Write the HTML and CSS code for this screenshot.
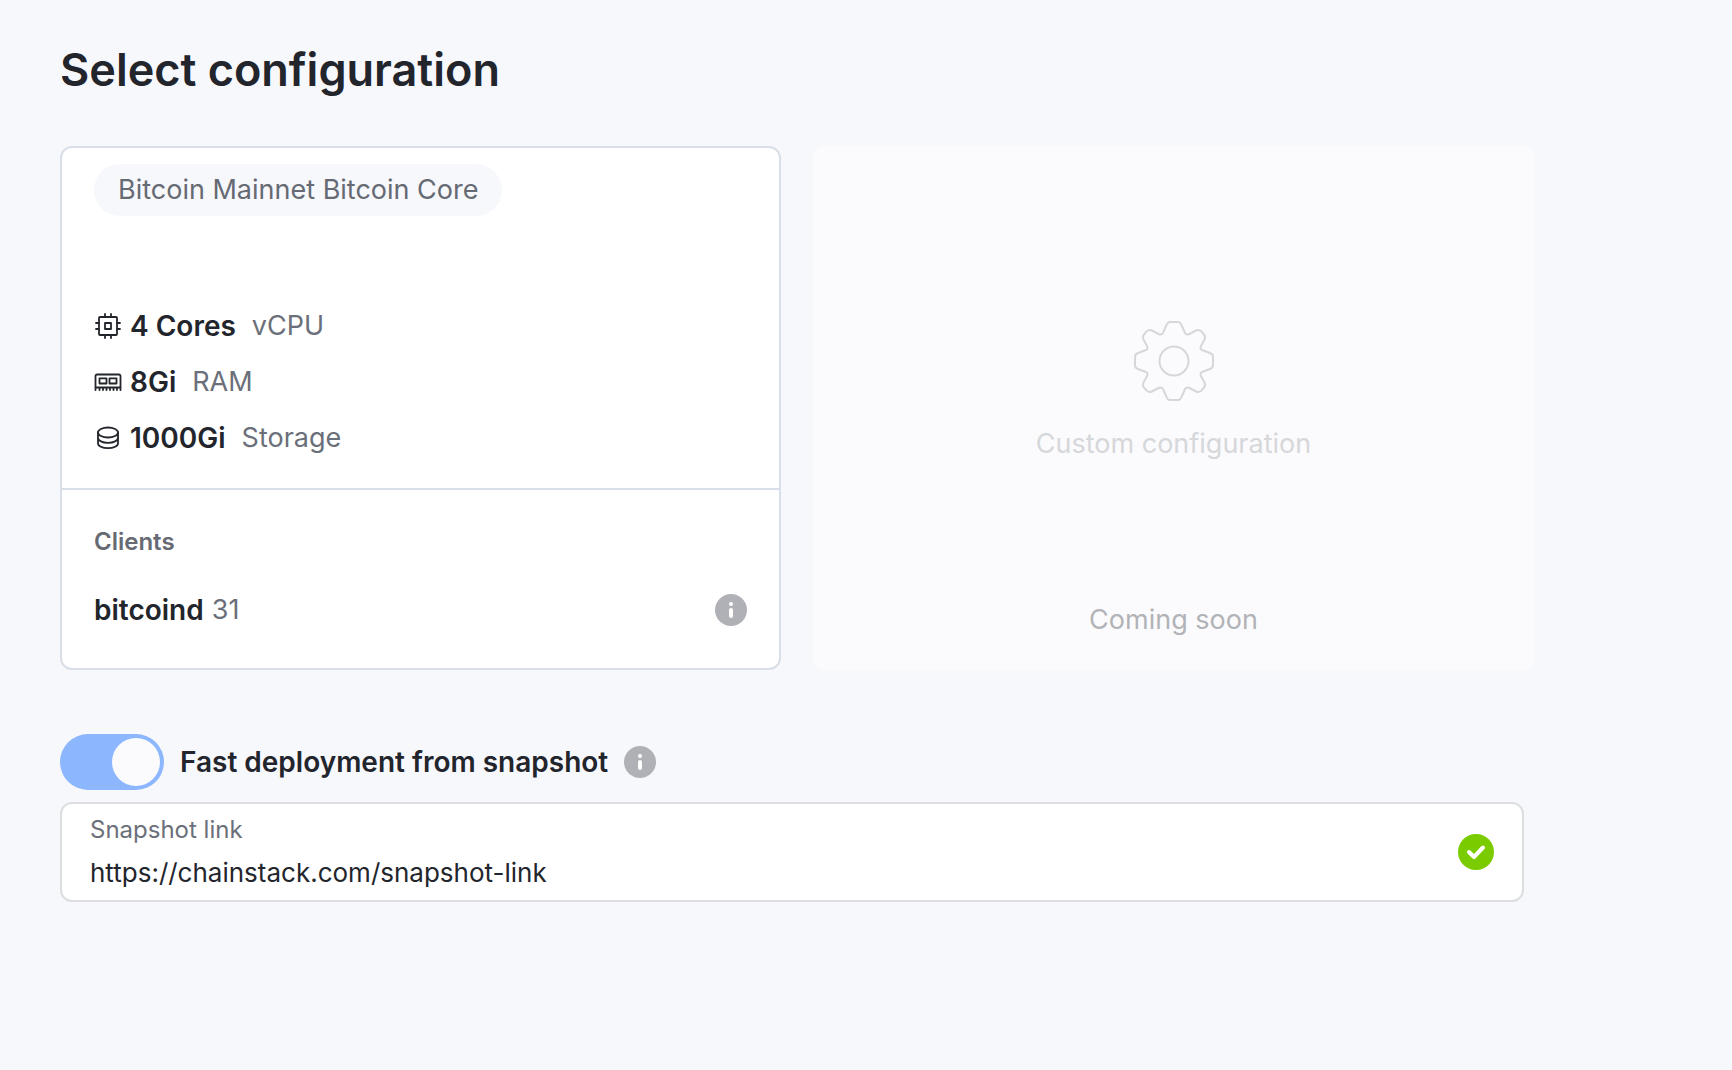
FILE: index.html
```html
<!DOCTYPE html>
<html lang="en">
<head>
<meta charset="utf-8">
<meta name="viewport" content="width=device-width, initial-scale=1">
<title>Select configuration</title>
<link rel="stylesheet" href="styles.css">
</head>
<body>
<main class="page">
  <h1 class="title">Select configuration</h1>

  <div class="options">
    <section class="card">
      <div class="card-main">
        <span class="pill">Bitcoin Mainnet Bitcoin Core</span>
        <ul class="specs">
          <li class="spec">
            <svg class="spec-icon" viewBox="0 0 28 28" aria-hidden="true"><rect x="5" y="5" width="18" height="18" rx="1"/><rect x="11" y="11" width="6" height="6"/><path d="M11 5V2M17 5V2M11 26v-3M17 26v-3M5 11H2M5 17H2M26 11h-3M26 17h-3"/></svg>
            <strong>4 Cores</strong><span class="muted">vCPU</span>
          </li>
          <li class="spec">
            <svg class="spec-icon" viewBox="0 0 28 28" aria-hidden="true"><path d="M1.500 22V8A1.500 1.500 0 0 1 3 6.500h22A1.500 1.500 0 0 1 26.500 8v14M2 19.500h24M5.500 20v2M9 20v2M12.500 20v2M16 20v2M19.500 20v2M23 20v2"/><rect x="5.500" y="10.300" width="7" height="5.200"/><rect x="15.500" y="10.300" width="7" height="5.200"/></svg>
            <strong>8Gi</strong><span class="muted">RAM</span>
          </li>
          <li class="spec">
            <svg class="spec-icon" viewBox="0 0 28 28" aria-hidden="true"><ellipse cx="14" cy="8.500" rx="10" ry="5"/><path d="M4 8.500v10.700c0 2.800 4.400 5 10 5s10-2.200 10-5V8.500M4 13.800c0 2.800 4.400 5 10 5s10-2.200 10-5"/></svg>
            <strong>1000Gi</strong><span class="muted">Storage</span>
          </li>
        </ul>
      </div>
      <div class="clients">
        <h2 class="clients-title">Clients</h2>
        <div class="client">
          <div class="client-name"><strong>bitcoind</strong><span class="muted">31</span></div>
          <button class="info" type="button" aria-label="About bitcoind">
            <svg viewBox="0 0 32 32" aria-hidden="true"><circle class="info-disc" cx="16" cy="16" r="16"/><circle cx="16" cy="10" r="2"/><rect x="14" y="14" width="4" height="10" rx="2"/></svg>
          </button>
        </div>
      </div>
    </section>

    <section class="card custom">
      <div class="custom-main">
        <svg class="gear" viewBox="-41 -41 82 82" aria-hidden="true"><path d="M-4.500 -39H4.500Q6.500 -38.500 7.500 -36L11 -28Q12.500 -25.500 15.500 -27L22 -30.500Q25 -31.800 27.500 -29.500L30 -26.500Q32 -24.500 30.500 -21.500L27 -15Q25.500 -12 28 -11L36 -8Q39 -7 39 -4V4Q39 7 36 8L28 11Q25.500 12 27 15L30.500 21.500Q32 24.500 30 26.500L27.500 29.500Q25 31.800 22 30.500L15.500 27Q12.500 25.500 11 28L7.500 36Q6.500 38.500 4.500 39H-4.500Q-6.500 38.500 -7.500 36L-11 28Q-12.500 25.500 -15.500 27L-22 30.500Q-25 31.800 -27.500 29.500L-30 26.500Q-32 24.500 -30.500 21.500L-27 15Q-25.500 12 -28 11L-36 8Q-39 7 -39 4V-4Q-39 -7 -36 -8L-28 -11Q-25.500 -12 -27 -15L-30.500 -21.500Q-32 -24.500 -30 -26.500L-27.500 -29.500Q-25 -31.800 -22 -30.500L-15.500 -27Q-12.500 -25.500 -11 -28L-7.500 -36Q-6.500 -38.500 -4.500 -39Z"/><circle r="14.500"/></svg>
        <span>Custom configuration</span>
      </div>
      <p class="soon">Coming soon</p>
    </section>
  </div>

  <div class="snapshot">
    <div class="toggle-row">
      <input class="toggle" type="checkbox" role="switch" id="fast" checked>
      <label for="fast">Fast deployment from snapshot</label>
      <button class="info" type="button" aria-label="About fast deployment">
        <svg viewBox="0 0 32 32" aria-hidden="true"><circle class="info-disc" cx="16" cy="16" r="16"/><circle cx="16" cy="10" r="2"/><rect x="14" y="14" width="4" height="10" rx="2"/></svg>
      </button>
    </div>
    <div class="field">
      <div class="field-body">
        <label class="field-label" for="link">Snapshot link</label>
        <input class="field-input" id="link" type="text" value="https://chainstack.com/snapshot-link" spellcheck="false">
      </div>
      <svg class="valid" viewBox="0 0 36 36" aria-hidden="true"><circle cx="18" cy="18" r="18"/><path d="M11 18l5 5 9-9.500"/></svg>
    </div>
  </div>
</main>
</body>
</html>
```

FILE: styles.css
```css
*,
*::before,
*::after {
  box-sizing: border-box;
}

body {
  margin: 0;
  background: #f7f8fc;
  color: #23252c;
  font-family: Inter, "Liberation Sans", sans-serif;
  font-size: 27px;
  line-height: 36px;
}

h1,
h2,
p,
ul {
  margin: 0;
  padding: 0;
}

strong {
  font-size: 28px;
  font-weight: 600;
}

.page {
  padding: 40px 198px 60px 60px;
}

.title {
  font-size: 45px;
  font-weight: 600;
  line-height: 60px;
}

.options {
  display: grid;
  grid-template-columns: 1fr 1fr;
  gap: 32px;
  margin-top: 46px;
}

.card {
  border: 2px solid #d8dfe9;
  border-radius: 12px;
  background: #fff;
}

.card-main {
  padding: 16px 32px 32px;
}

.pill {
  display: inline-block;
  padding: 8px 24px;
  border-radius: 26px;
  background: #f7f8fc;
  color: #666a73;
  vertical-align: top;
}

.specs {
  display: grid;
  gap: 20px;
  margin-top: 92px;
  list-style: none;
}

.spec {
  display: flex;
  align-items: center;
}

.spec .muted {
  margin-left: 16px;
}

.spec-icon {
  width: 28px;
  height: 28px;
  margin-right: 8px;
  fill: none;
  stroke: #23252c;
  stroke-width: 1.8;
  stroke-linecap: round;
  stroke-linejoin: round;
}

.muted {
  color: #6b6f7a;
}

.clients {
  padding: 34px 32px 40px;
  border-top: 2px solid #d8dfe9;
}

.clients-title {
  color: #666a73;
  font-size: 24px;
  font-weight: 600;
  line-height: 36px;
}

.client {
  display: flex;
  align-items: center;
  justify-content: space-between;
  margin-top: 32px;
}

.client-name {
  display: flex;
  gap: 8px;
}

.info {
  flex: none;
  width: 32px;
  height: 32px;
  padding: 0;
  border: 0;
  background: none;
}

.info svg {
  display: block;
  fill: #fff;
}

.info .info-disc {
  fill: #b0b1b6;
}

.custom {
  display: flex;
  flex-direction: column;
  border-color: #fbfbfd;
  background: #fbfbfd;
  padding: 32px 32px 30px;
  text-align: center;
}

.custom-main {
  display: flex;
  flex: 1;
  flex-direction: column;
  align-items: center;
  justify-content: center;
  gap: 24px;
  color: #d6d7da;
}

.gear {
  width: 82px;
  height: 82px;
  fill: none;
  stroke: currentColor;
  stroke-width: 2;
}

.soon {
  color: #b2b3b7;
}

.snapshot {
  margin: 64px 10px 0 0;
}

.toggle-row {
  display: flex;
  align-items: center;
  gap: 16px;
  font-size: 28px;
  font-weight: 600;
}

.toggle {
  display: flex;
  justify-content: flex-end;
  width: 104px;
  height: 56px;
  margin: 0;
  padding: 4px;
  appearance: none;
  border-radius: 28px;
  background: #8cb7ff;
}

.toggle::before {
  content: "";
  width: 48px;
  height: 48px;
  border-radius: 50%;
  background: #fbfbfd;
}

.toggle:not(:checked) {
  justify-content: flex-start;
  background: #c5c8d0;
}

.field {
  display: flex;
  align-items: center;
  gap: 16px;
  margin-top: 12px;
  padding: 8px 28px;
  border: 2px solid #dcdee1;
  border-radius: 12px;
  background: #fff;
}

.field-body {
  display: grid;
  flex: 1;
  gap: 4px;
}

.field-label {
  color: #6b6f7a;
  font-size: 24px;
  line-height: 36px;
}

.field-input {
  width: 100%;
  height: 40px;
  padding: 0;
  border: 0;
  outline: 0;
  background: none;
  color: #23252c;
  font: inherit;
  font-size: 26px;
}

.valid {
  flex: none;
  width: 36px;
  height: 36px;
  fill: #7acc00;
}

.valid path {
  fill: none;
  stroke: #fff;
  stroke-width: 4;
  stroke-linecap: round;
  stroke-linejoin: round;
}
```
